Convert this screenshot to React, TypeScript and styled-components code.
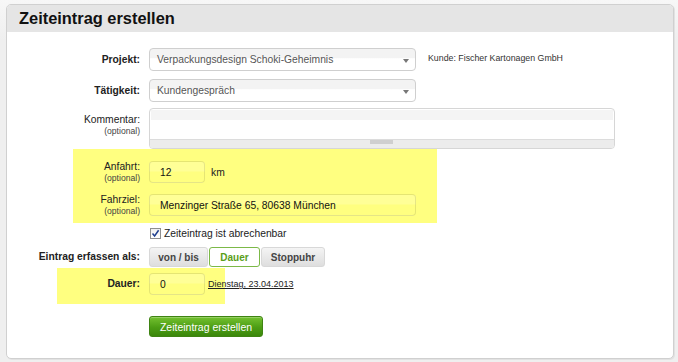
import React from "react";
import styled, { createGlobalStyle } from "styled-components";

const Global = createGlobalStyle`
  html, body { margin: 0; padding: 0; }
  body {
    background: #f0f0f0;
    font-family: "Liberation Sans", Arial, sans-serif;
    color: #222;
  }
`;

const Page = styled.div`
  width: 678px;
  height: 362px;
  padding: 4px 4px 0 6px;
  box-sizing: border-box;
  background: linear-gradient(#f7f7f7, #efefef 40px);
`;

const Card = styled.div`
  width: 668px;
  box-sizing: border-box;
  background: #fff;
  border: 1px solid #d0d0d0;
  border-radius: 5px;
  box-shadow: 1px 1px 0 #e2e2e2;
  padding-bottom: 21px;
`;

const Header = styled.div`
  height: 27px;
  background: #e5e5e5;
  border-radius: 4px 4px 0 0;
  padding-left: 12px;
  display: flex;
  align-items: center;
  font-size: 16.4px;
  font-weight: bold;
  color: #111;
`;

const Body = styled.div`
  padding-top: 16px;
  display: flex;
  flex-direction: column;
`;

const Row = styled.div<{ $mt?: number; $align?: string }>`
  display: flex;
  align-items: ${(p) => p.$align || "center"};
  gap: 9px;
  margin-top: ${(p) => p.$mt || 0}px;
  white-space: nowrap;
`;

const Label = styled.div<{ $w?: number; $bold?: boolean; $pt?: number }>`
  width: ${(p) => p.$w || 133}px;
  flex: none;
  text-align: right;
  font-size: 10.3px;
  font-weight: ${(p) => (p.$bold ? "bold" : "normal")};
  color: #222;
  padding-top: ${(p) => p.$pt || 0}px;
  line-height: 12px;
`;

const Optional = styled.div`
  font-size: 8.6px;
  line-height: 10px;
  color: #444;
`;

const Select = styled.div<{ $w: number }>`
  width: ${(p) => p.$w}px;
  flex: none;
  height: 23px;
  box-sizing: border-box;
  border: 1px solid #cfcfcf;
  border-radius: 4px;
  background: linear-gradient(#f3f3f3 0, #f3f3f3 42%, #fff 46%);
  display: flex;
  align-items: center;
  justify-content: space-between;
  padding: 0 6px 0 7px;
  font-size: 10.3px;
  color: #555;
`;

const Arrow = styled.span`
  width: 0;
  height: 0;
  border-left: 3px solid transparent;
  border-right: 3px solid transparent;
  border-top: 4px solid #777;
  margin-top: 2px;
`;

const Note = styled.div`
  font-size: 8.8px;
  color: #333;
  margin-left: 3px;
  margin-top: -4px;
`;

const Editor = styled.div`
  width: 466px;
  flex: none;
  height: 41px;
  box-sizing: border-box;
  border: 1px solid #d6d6d6;
  border-radius: 4px;
  background: #fff;
  display: flex;
  flex-direction: column;
  overflow: hidden;
`;

const EditorTop = styled.div`
  height: 10px;
  margin: 1px 1px 0;
  background: #f4f4f4;
  border-bottom: 1px solid #fff;
`;

const EditorArea = styled.div`
  flex: 1;
`;

const EditorBottom = styled.div`
  height: 8px;
  background: #ececec;
  border-top: 1px solid #dcdcdc;
  display: flex;
  justify-content: center;
`;

const Grip = styled.div`
  width: 23px;
  height: 4px;
  background: #cfcfcf;
  margin-left: -2px;
`;

const Highlight = styled.div<{ $ml: number; $w: number; $pt: number; $pb: number; $mt?: number; $gap?: number }>`
  margin-left: ${(p) => p.$ml}px;
  width: ${(p) => p.$w}px;
  background: #ffff80;
  padding: ${(p) => p.$pt}px 0 ${(p) => p.$pb}px;
  margin-top: ${(p) => p.$mt || 0}px;
  display: flex;
  flex-direction: column;
  gap: ${(p) => p.$gap || 0}px;
`;

const Field = styled.div<{ $w: number }>`
  width: ${(p) => p.$w}px;
  flex: none;
  height: 22px;
  box-sizing: border-box;
  border: 1px solid rgba(0, 0, 0, 0.1);
  border-radius: 4px;
  background: linear-gradient(rgba(255, 255, 255, 0.18) 0, rgba(255, 255, 255, 0.18) 45%, rgba(0, 0, 0, 0) 50%);
  display: flex;
  align-items: center;
  padding-left: 10px;
  font-size: 10.3px;
  color: #111;
`;

const Unit = styled.span`
  font-size: 10.3px;
  color: #222;
  margin-left: -3px;
`;

const CheckRow = styled.label`
  display: flex;
  align-items: center;
  gap: 3px;
  margin-left: 143px;
  margin-top: 5px;
  font-size: 10.3px;
  color: #222;
  height: 11px;
`;

const CheckBox = styled.span`
  width: 11px;
  height: 11px;
  box-sizing: border-box;
  border: 1px solid #8f8f8f;
  background: linear-gradient(#f0f0f0, #fff);
  display: flex;
  align-items: center;
  justify-content: center;
`;

const Segments = styled.div`
  display: flex;
  gap: 1px;
`;

const Seg = styled.div<{ $w: number; $active?: boolean }>`
  width: ${(p) => p.$w}px;
  height: 20px;
  box-sizing: border-box;
  border-radius: 3px;
  display: flex;
  align-items: center;
  justify-content: center;
  font-size: 10px;
  font-weight: bold;
  border: ${(p) => (p.$active ? "1.5px solid #7cb948" : "1px solid #d8d8d8")};
  background: ${(p) => (p.$active ? "#fff" : "linear-gradient(#f4f4f4, #dedede)")};
  color: ${(p) => (p.$active ? "#5a9e1a" : "#444")};
`;

const DateLink = styled.a`
  flex: none;
  font-size: 9px;
  color: #222;
  text-decoration: underline;
  margin-left: -6px;
`;

const Submit = styled.button`
  margin-left: 142px;
  margin-top: 12px;
  width: 114px;
  height: 21px;
  box-sizing: border-box;
  border: 1px solid #3f8413;
  border-radius: 3px;
  background: linear-gradient(#74c130, #4c9d14 55%, #3b870b);
  color: #fff;
  font-family: "Liberation Sans", Arial, sans-serif;
  font-size: 10.5px;
  padding: 0;
  box-shadow: inset 0 1px 0 rgba(255, 255, 255, 0.25);
`;

export default function App() {
  return (
    <>
      <Global />
      <Page>
        <Card>
          <Header>Zeiteintrag erstellen</Header>
          <Body>
            <Row>
              <Label $bold>Projekt:</Label>
              <Select $w={267}>
                <span>Verpackungsdesign Schoki-Geheimnis</span>
                <Arrow />
              </Select>
              <Note>Kunde: Fischer Kartonagen GmbH</Note>
            </Row>
            <Row $mt={8}>
              <Label $bold>Tätigkeit:</Label>
              <Select $w={267}>
                <span>Kundengespräch</span>
                <Arrow />
              </Select>
            </Row>
            <Row $mt={6} $align="flex-start">
              <Label $pt={6}>
                Kommentar:
                <Optional>(optional)</Optional>
              </Label>
              <Editor>
                <EditorTop />
                <EditorArea />
                <EditorBottom>
                  <Grip />
                </EditorBottom>
              </Editor>
            </Row>
            <Highlight $ml={66} $w={364} $pt={12} $pb={7} $gap={11}>
              <Row>
                <Label $w={67}>
                  Anfahrt:
                  <Optional>(optional)</Optional>
                </Label>
                <Field $w={56}>12</Field>
                <Unit>km</Unit>
              </Row>
              <Row>
                <Label $w={67}>
                  Fahrziel:
                  <Optional>(optional)</Optional>
                </Label>
                <Field $w={267}>Menzinger Straße 65, 80638 München</Field>
              </Row>
            </Highlight>
            <CheckRow>
              <CheckBox>
                <svg width="9" height="9" viewBox="0 0 9 9">
                  <path d="M1.5 4.5 L3.6 7 L7.6 1.2" fill="none" stroke="#1f3f8f" strokeWidth="1.5" />
                </svg>
              </CheckBox>
              Zeiteintrag ist abrechenbar
            </CheckRow>
            <Row $mt={8}>
              <Label $bold>Eintrag erfassen als:</Label>
              <Segments>
                <Seg $w={59}>von / bis</Seg>
                <Seg $w={51} $active>
                  Dauer
                </Seg>
                <Seg $w={64}>Stoppuhr</Seg>
              </Segments>
            </Row>
            <Highlight $ml={50} $w={168} $pt={5} $pb={9} $mt={1}>
              <Row>
                <Label $w={83} $bold>
                  Dauer:
                </Label>
                <Field $w={56}>0</Field>
                <DateLink href="#">Dienstag, 23.04.2013</DateLink>
              </Row>
            </Highlight>
            <Submit>Zeiteintrag erstellen</Submit>
          </Body>
        </Card>
      </Page>
    </>
  );
}
